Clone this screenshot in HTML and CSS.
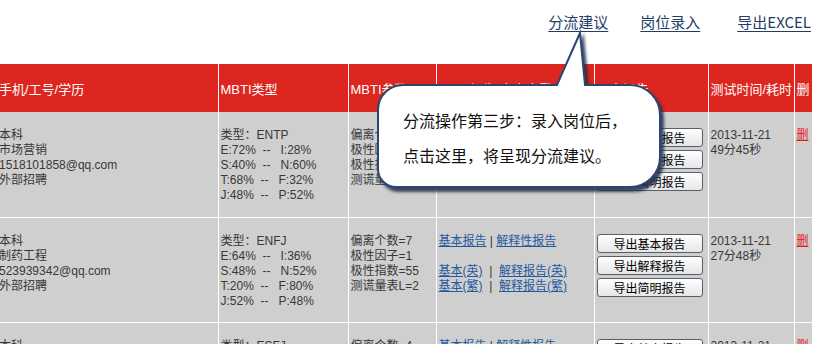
FILE: index.html
```html
<!DOCTYPE html>
<html>
<head>
<meta http-equiv="Content-Type" content="text/html; charset=utf-8"/>
<title>测评结果</title>
<link rel="stylesheet" href="styles.css">
</head>
<body>

<div class="toolbar">
  <a href="#">分流建议</a>
  <a href="#">岗位录入</a>
  <a href="#" class="last">导出EXCEL</a>
</div>

<table class="grid">
  <colgroup>
    <col class="c1"><col class="c2"><col class="c3"><col class="c4"><col class="c5"><col class="c6"><col class="c7">
  </colgroup>
  <tr class="head">
    <th>手机/工号/学历</th>
    <th>MBTI类型</th>
    <th>MBTI参数</th>
    <th>MBTI报告(点击查看)</th>
    <th>导出报告</th>
    <th>测试时间/耗时</th>
    <th>删</th>
  </tr>
  <tr class="row">
    <td>本科<br>市场营销<br>1518101858@qq.com<br>外部招聘</td>
    <td>类型：ENTP<br>E:72%&nbsp;&nbsp;--&nbsp;&nbsp;&nbsp;I:28%<br>S:40%&nbsp;&nbsp;--&nbsp;&nbsp;&nbsp;N:60%<br>T:68%&nbsp;&nbsp;--&nbsp;&nbsp;&nbsp;F:32%<br>J:48%&nbsp;&nbsp;--&nbsp;&nbsp;&nbsp;P:52%</td>
    <td>偏离个数=7<br>极性因子=1<br>极性指数=55<br>测谎量表L=2</td>
    <td><a href="#">基本报告</a> | <a href="#">解释性报告</a><br><br><a href="#">基本(英)</a>&nbsp;&nbsp;|&nbsp;&nbsp;<a href="#">解释报告(英)</a><br><a href="#">基本(繁)</a>&nbsp;&nbsp;|&nbsp;&nbsp;<a href="#">解释报告(繁)</a></td>
    <td><button class="btn">导出基本报告</button><button class="btn">导出解释报告</button><button class="btn">导出简明报告</button></td>
    <td>2013-11-21<br>49分45秒</td>
    <td><a href="#" class="del">删</a></td>
  </tr>
  <tr class="row">
    <td>本科<br>制药工程<br>523939342@qq.com<br>外部招聘</td>
    <td>类型：ENFJ<br>E:64%&nbsp;&nbsp;--&nbsp;&nbsp;&nbsp;I:36%<br>S:48%&nbsp;&nbsp;--&nbsp;&nbsp;&nbsp;N:52%<br>T:20%&nbsp;&nbsp;--&nbsp;&nbsp;&nbsp;F:80%<br>J:52%&nbsp;&nbsp;--&nbsp;&nbsp;&nbsp;P:48%</td>
    <td>偏离个数=7<br>极性因子=1<br>极性指数=55<br>测谎量表L=2</td>
    <td><a href="#">基本报告</a> | <a href="#">解释性报告</a><br><br><a href="#">基本(英)</a>&nbsp;&nbsp;|&nbsp;&nbsp;<a href="#">解释报告(英)</a><br><a href="#">基本(繁)</a>&nbsp;&nbsp;|&nbsp;&nbsp;<a href="#">解释报告(繁)</a></td>
    <td><button class="btn">导出基本报告</button><button class="btn">导出解释报告</button><button class="btn">导出简明报告</button></td>
    <td>2013-11-21<br>27分48秒</td>
    <td><a href="#" class="del">删</a></td>
  </tr>
  <tr class="row">
    <td>本科<br>软件工程<br>632018845@qq.com<br>外部招聘</td>
    <td>类型：ESFJ<br>E:60%&nbsp;&nbsp;--&nbsp;&nbsp;&nbsp;I:40%<br>S:56%&nbsp;&nbsp;--&nbsp;&nbsp;&nbsp;N:44%<br>T:36%&nbsp;&nbsp;--&nbsp;&nbsp;&nbsp;F:64%<br>J:60%&nbsp;&nbsp;--&nbsp;&nbsp;&nbsp;P:40%</td>
    <td>偏离个数=4<br>极性因子=1<br>极性指数=48<br>测谎量表L=1</td>
    <td><a href="#">基本报告</a> | <a href="#">解释性报告</a><br><br><a href="#">基本(英)</a>&nbsp;&nbsp;|&nbsp;&nbsp;<a href="#">解释报告(英)</a><br><a href="#">基本(繁)</a>&nbsp;&nbsp;|&nbsp;&nbsp;<a href="#">解释报告(繁)</a></td>
    <td><button class="btn">导出基本报告</button><button class="btn">导出解释报告</button><button class="btn">导出简明报告</button></td>
    <td>2013-11-21<br>31分12秒</td>
    <td><a href="#" class="del">删</a></td>
  </tr>
</table>

<!-- tip balloon pointing at 分流建议 -->
<div class="callout">
  <svg class="balloon" width="300" height="170" viewBox="0 0 300 170">
    <defs>
      <filter id="shade" x="-10%" y="-10%" width="130%" height="130%">
        <feDropShadow dx="3" dy="4" stdDeviation="1.8" flood-color="#1c2c44" flood-opacity="0.85"/>
      </filter>
    </defs>
    <path d="M33,57 H187 L210,5 L215,57 H260 A30,30 0 0 1 290,87 V129 A30,30 0 0 1 260,159 H26 A18,18 0 0 1 8,141 V82 A25,25 0 0 1 33,57 Z"
          fill="#fff" stroke="#2a4670" stroke-width="2" filter="url(#shade)"/>
  </svg>
  <div class="callout-text">分流操作第三步：录入岗位后，<br>点击这里，将呈现分流建议。</div>
</div>

</body>
</html>
```

FILE: styles.css
```css
body {
  margin: 0;
  height: 344px;
  overflow: hidden;
  position: relative;
  background: #fff;
  color: #383838;
  font-family: "Liberation Sans", "Noto Sans CJK SC", sans-serif;
  font-size: 12px;
}

.toolbar {
  display: flex;
  justify-content: flex-end;
  gap: 32px;
  height: 64px;
  padding: 11px 21px 0 0;
  box-sizing: border-box;
}

.toolbar a {
  color: #1f3d66;
  font-family: "Noto Sans CJK SC", sans-serif;
  font-size: 15px;
  line-height: 22px;
  text-decoration: underline;
  text-underline-offset: 3px;
}

.toolbar a.last {
  margin-left: 5px;
}

table.grid {
  border-collapse: collapse;
  table-layout: fixed;
  width: 815px;
  margin-left: -3px;
}

col.c1 { width: 221px; }
col.c2 { width: 130px; }
col.c3 { width: 88px; }
col.c4 { width: 158px; }
col.c5 { width: 114px; }
col.c6 { width: 86px; }
col.c7 { width: 18px; }

.grid th {
  height: 48px;
  padding: 0 2px;
  background: #dd261f;
  color: #fff;
  font-size: 13px;
  font-weight: normal;
  text-align: left;
  white-space: nowrap;
  overflow: hidden;
  border-left: 1px solid #fff;
}

.grid th:first-child,
.grid td:first-child {
  border-left: none;
}

.grid tr.row {
  height: 105px;
}

.grid td {
  background: #cfcfcf;
  vertical-align: top;
  padding: 16px 2px 0;
  line-height: 15px;
  white-space: nowrap;
  overflow: hidden;
  border: 1px solid #fff;
  border-top: none;
}

.grid td a {
  color: #1f5a9e;
  text-decoration: underline;
}

.grid td a.del {
  color: #e41b1b;
}

.btn {
  display: block;
  width: 106px;
  height: 19px;
  margin: 0 0 3px;
  padding: 0;
  font-family: "Noto Sans CJK SC", sans-serif;
  font-size: 12px;
  line-height: 17px;
  color: #000;
  background: linear-gradient(#ffffff, #e6e6e6);
  border: 1px solid #56606c;
  border-radius: 3px;
}

.callout {
  position: absolute;
  left: 370px;
  top: 28px;
  width: 300px;
  height: 170px;
}

.balloon {
  display: block;
}

.callout-text {
  position: absolute;
  left: 33px;
  top: 75px;
  font-family: "Noto Sans CJK SC", sans-serif;
  font-size: 16px;
  line-height: 35px;
  color: #111;
  white-space: nowrap;
}
```
